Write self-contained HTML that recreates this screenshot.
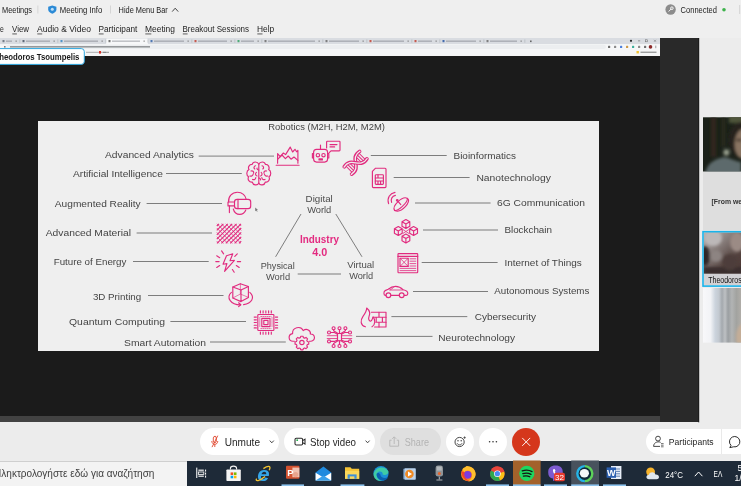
<!DOCTYPE html>
<html lang="en">
<head>
<meta charset="utf-8">
<title>Webex Meeting</title>
<style>
html,body{margin:0;padding:0;background:#eeeeee;}
body{width:741px;height:486px;overflow:hidden;position:relative;font-family:"Liberation Sans",sans-serif;}
#app{position:absolute;left:0;top:0;width:741px;height:486px;overflow:hidden;background:#eeeeee;}
.abs{position:absolute;}
#titlebar{left:0;top:0;width:741px;height:19px;background:#efefef;}
#menubar{left:0;top:19px;width:741px;height:19px;background:#efefef;}
#share{left:0;top:38px;width:660px;height:384.4px;background:#1b1b1b;overflow:hidden;}
#chrome-tabs{left:0;top:0;width:660px;height:6px;background:#dcdfe4;}
#chrome-addr{left:0;top:5.6px;width:660px;height:6px;background:#f3f4f5;}
#chrome-bm{left:0;top:12px;width:660px;height:6px;background:#f4f4f4;}
#share-bottom{left:0;top:378px;width:660px;height:6.4px;background:#424242;}
#slide{left:38.3px;top:83.3px;width:560.4px;height:229.9px;background:#efefef;}
#sidepanel{left:660px;top:38px;width:39px;height:384.4px;background:#292929;}
#videostrip{left:699px;top:38px;width:42px;height:384px;background:#ececec;}
#toolbar{left:0;top:422.4px;width:741px;height:38.2px;background:#ececec;}
#taskbar{left:0;top:460.5px;width:741px;height:26px;background:#1e2a38;}
#search{left:0;top:0.5px;width:187px;height:25.5px;background:#f3f3f3;border-top:0.8px solid #cfcfcf;box-sizing:border-box;}
.pill{position:absolute;background:#ffffff;border-radius:14px;}
#overlay{left:0;top:0;width:741px;height:486px;filter:blur(0.28px);}
svg text{font-family:"Liberation Sans",sans-serif;}
</style>
</head>
<body>
<div id="app">
  <div id="titlebar" class="abs"></div>
  <div id="menubar" class="abs"></div>
  <div id="share" class="abs">
    <div id="chrome-tabs" class="abs"></div>
    <div id="chrome-addr" class="abs"></div>
    <div id="chrome-bm" class="abs"></div>
    <div id="slide" class="abs"></div>
    <div id="share-bottom" class="abs"></div>
  </div>
  <div id="sidepanel" class="abs"></div>
  <div id="videostrip" class="abs"></div>
  <div id="toolbar" class="abs">
    <div class="pill" style="left:200px;top:5.6px;width:79px;height:27.4px;"></div>
    <div class="pill" style="left:284px;top:5.6px;width:91px;height:27.4px;"></div>
    <div class="pill" style="left:380px;top:5.6px;width:61px;height:27.4px;background:#dfdfdf;"></div>
    <div class="pill" style="left:446px;top:5.6px;width:28px;height:28px;"></div>
    <div class="pill" style="left:479px;top:5.6px;width:28px;height:28px;"></div>
    <div class="pill" style="left:512px;top:5.6px;width:28px;height:28px;background:#d5371c;"></div>
    <div class="pill" style="left:646px;top:6.5px;width:120px;height:25px;"></div>
  </div>
  <div id="taskbar" class="abs">
    <div id="search" class="abs"></div>
  </div>
  <svg id="overlay" class="abs" width="741" height="486" viewBox="0 0 741 486">
    <defs><filter id="soft" x="-2%" y="-2%" width="104%" height="104%"><feGaussianBlur stdDeviation="0.38"/></filter><filter id="soft2" x="-2%" y="-10%" width="104%" height="120%"><feGaussianBlur stdDeviation="0.25"/></filter></defs>
    <!--TITLEBAR-->
    <g id="titlebar-text" font-size="9.5" fill="#222222">
    <text x="2" y="12.8" textLength="30.0" lengthAdjust="spacingAndGlyphs">Meetings</text>
    <rect x="37.5" y="5.5" width="0.8" height="8" fill="#cfcfcf"/>
    <path d="M52.3 5.4 L56.4 6.8 V9.6 C56.4 11.6 54.6 13 52.3 13.8 C50 13 48.2 11.6 48.2 9.6 V6.8 Z" fill="#2b8ad6"/>
    <circle cx="52.3" cy="9.3" r="1.5" fill="#bfe0f7"/>
    <text x="59.8" y="12.8" textLength="42.5" lengthAdjust="spacingAndGlyphs">Meeting Info</text>
    <rect x="110" y="5.5" width="0.8" height="8" fill="#cfcfcf"/>
    <text x="118.6" y="12.8" textLength="49.2" lengthAdjust="spacingAndGlyphs">Hide Menu Bar</text>
    <path d="M172.2 11.6 L175.2 8.2 L178.2 11.6" stroke="#333" stroke-width="0.9" fill="none"/>
    <circle cx="670.6" cy="9.5" r="5.2" fill="#8c8c8c"/>
    <path d="M668.6 11.5 L671.2 8.9 M671.9 8.2 m-1.3 0 a1.3 1.3 0 1 0 2.6 0 a1.3 1.3 0 1 0 -2.6 0" stroke="#fff" stroke-width="0.9" fill="none"/>
    <text x="680.6" y="12.8" textLength="36.4" lengthAdjust="spacingAndGlyphs">Connected</text>
    <circle cx="724" cy="9.8" r="1.8" fill="#3db24b"/>
    <rect x="739.3" y="5" width="0.8" height="9" fill="#cfcfcf"/>
    </g>
    <!--/TITLEBAR-->
    <!--MENUBAR-->
    <g id="menubar-text" font-size="9.5" fill="#1e1e1e">
    <text x="0" y="32.4" textLength="3.8" lengthAdjust="spacingAndGlyphs">e</text>
    <text x="12" y="32.4" textLength="17.0" lengthAdjust="spacingAndGlyphs">View</text>
    <rect x="12.3" y="33.6" width="4.6" height="0.7" fill="#1e1e1e"/>
    <text x="37" y="32.4" textLength="54.0" lengthAdjust="spacingAndGlyphs">Audio &amp; Video</text>
    <rect x="37.3" y="33.6" width="4.9" height="0.7" fill="#1e1e1e"/>
    <text x="98.5" y="32.4" textLength="38.9" lengthAdjust="spacingAndGlyphs">Participant</text>
    <rect x="98.8" y="33.6" width="4.8" height="0.7" fill="#1e1e1e"/>
    <text x="145" y="32.4" textLength="30.0" lengthAdjust="spacingAndGlyphs">Meeting</text>
    <rect x="145.3" y="33.6" width="6" height="0.7" fill="#1e1e1e"/>
    <text x="182.5" y="32.4" textLength="66.5" lengthAdjust="spacingAndGlyphs">Breakout Sessions</text>
    <rect x="182.8" y="33.6" width="4.8" height="0.7" fill="#1e1e1e"/>
    <text x="257" y="32.4" textLength="17.2" lengthAdjust="spacingAndGlyphs">Help</text>
    <rect x="257.3" y="33.6" width="5.2" height="0.7" fill="#1e1e1e"/>
    </g>
    <!--/MENUBAR-->
    <!--CHROME-->
    <g id="browser-chrome">
    <rect x="0" y="38" width="660" height="6.2" fill="#d9dce1"/>
    <rect x="106" y="38.6" width="42" height="5.6" rx="1.2" fill="#f7f8f9"/>
    <rect x="0" y="44.2" width="660" height="5.4" fill="#f6f7f8"/>
    <rect x="6" y="44.8" width="600" height="4.2" rx="2.1" fill="#eceef0"/>
    <rect x="0" y="49.6" width="660" height="5.6" fill="#f4f5f6"/>
    <rect x="2.5" y="40" width="2" height="2.2" fill="#5a6570" opacity="0.8"/>
    <rect x="6" y="40.6" width="6" height="1.1" fill="#6b7078" opacity="0.55"/>
    <rect x="15.5" y="40.5" width="1.3" height="1.3" fill="#555" opacity="0.6"/>
    <rect x="19.6" y="39.5" width="0.6" height="3.2" fill="#9aa0a6" opacity="0.7"/>
    <rect x="22.5" y="40" width="2" height="2.2" fill="#3d4a5a" opacity="0.8"/>
    <rect x="26" y="40.6" width="24" height="1.1" fill="#6b7078" opacity="0.55"/>
    <rect x="53.5" y="40.5" width="1.3" height="1.3" fill="#555" opacity="0.6"/>
    <rect x="57.6" y="39.5" width="0.6" height="3.2" fill="#9aa0a6" opacity="0.7"/>
    <rect x="60.5" y="40" width="2" height="2.2" fill="#2c7fc0" opacity="0.8"/>
    <rect x="64" y="40.6" width="34" height="1.1" fill="#6b7078" opacity="0.55"/>
    <rect x="101.5" y="40.5" width="1.3" height="1.3" fill="#555" opacity="0.6"/>
    <rect x="105.6" y="39.5" width="0.6" height="3.2" fill="#9aa0a6" opacity="0.7"/>
    <rect x="108.5" y="40" width="2" height="2.2" fill="#555" opacity="0.8"/>
    <rect x="112" y="40.6" width="28" height="1.1" fill="#6b7078" opacity="0.55"/>
    <rect x="143.5" y="40.5" width="1.3" height="1.3" fill="#555" opacity="0.6"/>
    <rect x="147.6" y="39.5" width="0.6" height="3.2" fill="#9aa0a6" opacity="0.7"/>
    <rect x="150.5" y="40" width="2" height="2.2" fill="#2d5fa8" opacity="0.8"/>
    <rect x="154" y="40.6" width="30" height="1.1" fill="#6b7078" opacity="0.55"/>
    <rect x="187.5" y="40.5" width="1.3" height="1.3" fill="#555" opacity="0.6"/>
    <rect x="191.6" y="39.5" width="0.6" height="3.2" fill="#9aa0a6" opacity="0.7"/>
    <rect x="194.5" y="40" width="2" height="2.2" fill="#c0392b" opacity="0.8"/>
    <rect x="198" y="40.6" width="29" height="1.1" fill="#6b7078" opacity="0.55"/>
    <rect x="230.5" y="40.5" width="1.3" height="1.3" fill="#555" opacity="0.6"/>
    <rect x="234.6" y="39.5" width="0.6" height="3.2" fill="#9aa0a6" opacity="0.7"/>
    <rect x="237.5" y="40" width="2" height="2.2" fill="#2a9d5c" opacity="0.8"/>
    <rect x="241" y="40.6" width="13" height="1.1" fill="#6b7078" opacity="0.55"/>
    <rect x="257.5" y="40.5" width="1.3" height="1.3" fill="#555" opacity="0.6"/>
    <rect x="261.6" y="39.5" width="0.6" height="3.2" fill="#9aa0a6" opacity="0.7"/>
    <rect x="264.5" y="40" width="2" height="2.2" fill="#666" opacity="0.8"/>
    <rect x="268" y="40.6" width="47" height="1.1" fill="#6b7078" opacity="0.55"/>
    <rect x="318.5" y="40.5" width="1.3" height="1.3" fill="#555" opacity="0.6"/>
    <rect x="322.6" y="39.5" width="0.6" height="3.2" fill="#9aa0a6" opacity="0.7"/>
    <rect x="325.5" y="40" width="2" height="2.2" fill="#666" opacity="0.8"/>
    <rect x="329" y="40.6" width="30" height="1.1" fill="#6b7078" opacity="0.55"/>
    <rect x="362.5" y="40.5" width="1.3" height="1.3" fill="#555" opacity="0.6"/>
    <rect x="366.6" y="39.5" width="0.6" height="3.2" fill="#9aa0a6" opacity="0.7"/>
    <rect x="369.5" y="40" width="2" height="2.2" fill="#c0392b" opacity="0.8"/>
    <rect x="373" y="40.6" width="31" height="1.1" fill="#6b7078" opacity="0.55"/>
    <rect x="407.5" y="40.5" width="1.3" height="1.3" fill="#555" opacity="0.6"/>
    <rect x="411.6" y="39.5" width="0.6" height="3.2" fill="#9aa0a6" opacity="0.7"/>
    <rect x="414.5" y="40" width="2" height="2.2" fill="#c0392b" opacity="0.8"/>
    <rect x="418" y="40.6" width="14" height="1.1" fill="#6b7078" opacity="0.55"/>
    <rect x="435.5" y="40.5" width="1.3" height="1.3" fill="#555" opacity="0.6"/>
    <rect x="439.6" y="39.5" width="0.6" height="3.2" fill="#9aa0a6" opacity="0.7"/>
    <rect x="442.5" y="40" width="2" height="2.2" fill="#1d4fa0" opacity="0.8"/>
    <rect x="446" y="40.6" width="30" height="1.1" fill="#6b7078" opacity="0.55"/>
    <rect x="479.5" y="40.5" width="1.3" height="1.3" fill="#555" opacity="0.6"/>
    <rect x="483.6" y="39.5" width="0.6" height="3.2" fill="#9aa0a6" opacity="0.7"/>
    <rect x="486.5" y="40" width="2" height="2.2" fill="#666" opacity="0.8"/>
    <rect x="490" y="40.6" width="27" height="1.1" fill="#6b7078" opacity="0.55"/>
    <rect x="520.5" y="40.5" width="1.3" height="1.3" fill="#555" opacity="0.6"/>
    <rect x="524.6" y="39.5" width="0.6" height="3.2" fill="#9aa0a6" opacity="0.7"/>
    <rect x="530" y="40.5" width="1.6" height="1.6" fill="#333" opacity="0.7"/>
    <circle cx="631" cy="40.8" r="1.1" fill="#222"/>
    <rect x="638" y="40.6" width="2.2" height="0.6" fill="#666"/>
    <rect x="645.5" y="39.8" width="2" height="2" fill="none" stroke="#666" stroke-width="0.5"/>
    <path d="M654 39.8 l2 2 m0 -2 l-2 2" stroke="#666" stroke-width="0.5"/>
    <rect x="10" y="46.3" width="140" height="1.1" fill="#3c4043" opacity="0.7"/>
    <rect x="4" y="46" width="1.6" height="1.6" fill="#444" opacity="0.7"/>
    <rect x="608" y="45.8" width="2.2" height="2.2" rx="0.6" fill="#555" opacity="0.85"/>
    <rect x="614" y="45.8" width="2.2" height="2.2" rx="0.6" fill="#777" opacity="0.85"/>
    <rect x="620" y="45.8" width="2.2" height="2.2" rx="0.6" fill="#2f6bd6" opacity="0.85"/>
    <rect x="626" y="45.8" width="2.2" height="2.2" rx="0.6" fill="#c58a2a" opacity="0.85"/>
    <rect x="632" y="45.8" width="2.2" height="2.2" rx="0.6" fill="#1aa08a" opacity="0.85"/>
    <rect x="638" y="45.8" width="2.2" height="2.2" rx="0.6" fill="#777" opacity="0.85"/>
    <rect x="644" y="45.8" width="2.2" height="2.2" rx="0.6" fill="#555" opacity="0.85"/>
    <circle cx="650.5" cy="46.9" r="1.8" fill="#8c2b2b"/>
    <rect x="655.5" y="45.6" width="0.7" height="2.6" fill="#777"/>
    <rect x="86" y="51.8" width="20" height="1" fill="#666" opacity="0.5"/>
    <rect x="99" y="51" width="2" height="2.6" fill="#d93025"/>
    <rect x="103" y="51.8" width="6" height="1" fill="#555" opacity="0.6"/>
    <rect x="636.5" y="51" width="2.4" height="2.4" fill="#f2c12e"/>
    <rect x="640.5" y="51.7" width="16" height="1" fill="#444" opacity="0.7"/>
    </g>
    <g id="name-label">
    <rect x="-6" y="48.6" width="90.3" height="15.8" rx="3" fill="#ffffff" stroke="#2ba6df" stroke-width="1"/>
    <text x="-5.6" y="60" font-size="9.3" font-weight="bold" fill="#1a1a1a" textLength="85" lengthAdjust="spacingAndGlyphs">Theodoros Tsoumpelis</text>
    </g>
    <!--/CHROME-->
    <g id="slide-content" filter="url(#soft)">
    <!--SLIDE-->
    <g id="slide-lines" stroke="#707070" stroke-width="0.9" fill="none">
    <line x1="198.7" y1="156.1" x2="274" y2="156.1"/>
    <line x1="166" y1="173.5" x2="241.8" y2="173.5"/>
    <line x1="146.6" y1="203.5" x2="222" y2="203.5"/>
    <line x1="136.6" y1="233" x2="212" y2="233"/>
    <line x1="133" y1="261.5" x2="208.7" y2="261.5"/>
    <line x1="148" y1="295.5" x2="223.5" y2="295.5"/>
    <line x1="170.4" y1="321.5" x2="246" y2="321.5"/>
    <line x1="210" y1="342" x2="285.8" y2="342"/>
    <line x1="370.8" y1="155.5" x2="446.7" y2="155.5"/>
    <line x1="393.7" y1="177.5" x2="469.6" y2="177.5"/>
    <line x1="415" y1="203" x2="490.6" y2="203"/>
    <line x1="423" y1="230" x2="498" y2="230"/>
    <line x1="421.7" y1="262.5" x2="497.6" y2="262.5"/>
    <line x1="413" y1="291.5" x2="488" y2="291.5"/>
    <line x1="391.4" y1="316.6" x2="467.3" y2="316.6"/>
    <line x1="356" y1="336.4" x2="432.5" y2="336.4"/>
    <line x1="301" y1="214" x2="275.6" y2="256.8"/><line x1="335.8" y1="214" x2="362" y2="256.8"/><line x1="297.7" y1="274" x2="341" y2="274"/>
    </g>
    <g id="slide-labels" font-size="9.4" fill="#444444">
    <text x="105" y="158.1" textLength="89.0" lengthAdjust="spacingAndGlyphs">Advanced Analytics</text>
    <text x="73" y="176.6" textLength="89.8" lengthAdjust="spacingAndGlyphs">Artificial Intelligence</text>
    <text x="54.8" y="206.6" textLength="85.9" lengthAdjust="spacingAndGlyphs">Augmented Reality</text>
    <text x="45.7" y="236.1" textLength="85.3" lengthAdjust="spacingAndGlyphs">Advanced Material</text>
    <text x="53.7" y="264.6" textLength="72.7" lengthAdjust="spacingAndGlyphs">Future of Energy</text>
    <text x="92.9" y="299.6" textLength="48.3" lengthAdjust="spacingAndGlyphs">3D Printing</text>
    <text x="69" y="325.1" textLength="96.0" lengthAdjust="spacingAndGlyphs">Quantum Computing</text>
    <text x="124" y="346.1" textLength="82.0" lengthAdjust="spacingAndGlyphs">Smart Automation</text>
    <text x="453.5" y="158.6" textLength="62.5" lengthAdjust="spacingAndGlyphs">Bioinformatics</text>
    <text x="476.4" y="180.9" textLength="74.6" lengthAdjust="spacingAndGlyphs">Nanotechnology</text>
    <text x="497" y="206.1" textLength="88.0" lengthAdjust="spacingAndGlyphs">6G Communication</text>
    <text x="504.4" y="232.8" textLength="47.6" lengthAdjust="spacingAndGlyphs">Blockchain</text>
    <text x="504.4" y="265.8" textLength="77.3" lengthAdjust="spacingAndGlyphs">Internet of Things</text>
    <text x="494.3" y="294.4" textLength="95.1" lengthAdjust="spacingAndGlyphs">Autonomous Systems</text>
    <text x="474.7" y="319.7" textLength="61.3" lengthAdjust="spacingAndGlyphs">Cybersecurity</text>
    <text x="438.3" y="340.6" textLength="76.7" lengthAdjust="spacingAndGlyphs">Neurotechnology</text>
    <text x="268.3" y="130.2" textLength="116.6" lengthAdjust="spacingAndGlyphs">Robotics (M2H, H2M, M2M)</text>
    </g>
    <g id="slide-center" font-size="9.2" fill="#4c4c4c">
    <text x="305.6" y="201.6" textLength="27.2" lengthAdjust="spacingAndGlyphs">Digital</text>
    <text x="307.2" y="212.6" textLength="24.1" lengthAdjust="spacingAndGlyphs">World</text>
    <text x="260.7" y="269.4" textLength="34.0" lengthAdjust="spacingAndGlyphs">Physical</text>
    <text x="266" y="280.1" textLength="24.1" lengthAdjust="spacingAndGlyphs">World</text>
    <text x="347.2" y="267.9" textLength="27.0" lengthAdjust="spacingAndGlyphs">Virtual</text>
    <text x="349.2" y="278.7" textLength="23.9" lengthAdjust="spacingAndGlyphs">World</text>
    <text x="300" y="243.3" font-weight="bold" fill="#e32a80" font-size="10.2" textLength="39" lengthAdjust="spacingAndGlyphs">Industry</text>
    <text x="312.2" y="256.1" font-weight="bold" fill="#e32a80" font-size="10.2" textLength="15" lengthAdjust="spacingAndGlyphs">4.0</text>
    </g>
    <!--/SLIDE-->
    <!--ICONS-->
    <g id="slide-icons" fill="none" stroke="#e12c7f" stroke-width="1.15" stroke-linecap="round" stroke-linejoin="round">
      <!-- analytics -->
      <g id="ic-analytics">
        <path d="M276.2 165.2 H299.1"/>
        <path d="M277.6 163.2 V153.6 L280.2 156.6 L283.4 153 L285.6 154.6 L290.2 147.1 L292.6 152 L295 149.3 L296.6 151.8 L297.9 150.4 V163.2"/>
        <path d="M277.6 159.4 L282 155 L285.4 158.6 L288.2 156 L291 159.2 L294 157 L297.9 160.4"/>
      </g>
      <!-- robot -->
      <g id="ic-robot">
        <rect x="313.6" y="149.3" width="14" height="12.8" rx="3"/>
        <path d="M320.5 149.3 V145"/>
        <path d="M313.6 153.6 H312.4 V158 H313.6 M327.6 153.6 H328.8 V158 H327.6"/>
        <circle cx="317.9" cy="155.2" r="1.7"/><circle cx="323.5" cy="155.2" r="1.7"/>
        <rect x="319" y="158.8" width="3.4" height="1.2"/>
        <path d="M329.2 152.6 L331 150.8 H339.2 Q340 150.8 340 150 V142 Q340 141.2 339.2 141.2 H327.4 Q326.6 141.2 326.6 142 V148"/>
        <path d="M330 144.6 H337 M330 146.9 H334.6"/>
      </g>
      <!-- dna -->
      <g id="ic-dna" transform="translate(355.6 162.8) rotate(-45)">
        <path d="M-9.2 -5 V5 M-6.8 -5.6 V5.6 M-4.4 -5.4 V5.4 M9.2 -5 V5 M6.8 -5.6 V5.6 M4.4 -5.4 V5.4" stroke-width="1"/>
        <path d="M-10.8 5.2 C 1.5 8, -1.5 -8, 10.8 -5.2" stroke-width="3.7"/>
        <path d="M-11.2 5.1 C 1.5 8, -1.5 -8, 11.2 -5.1" stroke-width="1.3" stroke="#efefef"/>
        <path d="M-10.8 -5.2 C 1.5 -8, -1.5 8, 10.8 5.2" stroke-width="3.7"/>
        <path d="M-11.2 -5.1 C 1.5 -8, -1.5 8, 11.2 5.1" stroke-width="1.3" stroke="#efefef"/>
      </g>
      <!-- brain -->
      <g id="ic-brain">
        <path d="M258.8 164.2 C257.6 161.4 253 161.2 252.2 164.4 C249.2 164.2 247.6 167.4 249 169.6 C246.2 171 246.2 175.4 248.6 176.8 C247.2 179.6 249.4 182.6 252.2 182 C253 185.4 257.6 185.8 258.8 183 Z"/>
        <path d="M258.8 164.2 C260 161.4 264.6 161.2 265.4 164.4 C268.4 164.2 270 167.4 268.6 169.6 C271.4 171 271.4 175.4 269 176.8 C270.4 179.6 268.2 182.6 265.4 182 C264.6 185.4 260 185.8 258.8 183"/>
        <path d="M255.6 165.8 C254 166 253.4 168 254.8 169 M251 171 C252.6 170.4 254 171.6 253.6 173.2 M249.8 176 C251.6 176.4 253 175.4 253.2 174 M256.4 172.4 C255 173.4 255.4 175.6 257 176 M252.6 179.4 C254 180.2 255.8 179.2 255.8 177.6 M258.8 170 C257.6 170 256.8 169 257 168"/>
        <path d="M262 165.8 C263.6 166 264.2 168 262.8 169 M266.6 171 C265 170.4 263.6 171.6 264 173.2 M267.8 176 C266 176.4 264.6 175.4 264.4 174 M261.2 172.4 C262.6 173.4 262.2 175.6 260.6 176 M265 179.4 C263.6 180.2 261.8 179.2 261.8 177.6 M258.8 178 C260 178 260.8 179 260.6 180"/>
      </g>
      <!-- AR headset -->
      <g id="ic-ar">
        <path d="M228.6 202 C228 196.6 232 192.2 237.4 192.2 C242.4 192.2 245.6 195.6 246.2 199.4"/>
        <rect x="234.5" y="199.4" width="16.2" height="9.2" rx="2.6"/>
        <path d="M238 199.4 V208.6"/>
        <path d="M234.5 202 H228 V205.9 H234.5"/>
        <path d="M229.4 205.9 V212.6"/>
        <path d="M233.3 209 C234.2 212.4 237 214.4 239.8 214.4 C242.6 214.4 244.8 212.6 245.8 210"/>
      </g>
      <!-- mesh -->
      <g id="ic-mesh" stroke-linecap="butt">
        <path d="M219.0 223.8 L216.8 226.0 M223.4 223.8 L216.8 230.4 M227.8 223.8 L216.8 234.8 M232.2 223.8 L216.8 239.2 M236.6 223.8 L217.0 243.4 M241.0 223.8 L221.4 243.4 M241.2 228.0 L225.8 243.4 M241.2 232.4 L230.2 243.4 M241.2 236.8 L234.6 243.4 M241.2 241.2 L239.0 243.4" stroke-width="1.15"/>
        <path d="M216.8 241.2 L219.0 243.4 M216.8 236.8 L223.4 243.4 M216.8 232.4 L227.8 243.4 M216.8 228.0 L232.2 243.4 M217.0 223.8 L236.6 243.4 M221.4 223.8 L241.0 243.4 M225.8 223.8 L241.2 239.2 M230.2 223.8 L241.2 234.8 M234.6 223.8 L241.2 230.4 M239.0 223.8 L241.2 226.0" stroke-width="0.75"/>
      </g>
      <!-- energy -->
      <g id="ic-energy">
        <path d="M226.5 255.8 L232.8 253.8 L230 260.7 L234.4 260.3 L224.6 271.4 L226.9 263.6 L223 264.2 Z"/>
        <path d="M215.8 261.6 H219.1 M216.7 255.8 L219.7 257.7 M221.6 250.9 L223.6 253.8 M237.3 253.8 L234.8 256.4 M237.3 261.6 H240.6 M236.3 265.5 L239.2 267.5 M232.4 269.5 L234.2 272.2 M216.7 267.5 L219.7 265.5"/>
      </g>
      <!-- 3d printing -->
      <g id="ic-3d">
        <path d="M232.8 287 L240.4 283.7 L248.4 286.5 L241 290 Z"/>
        <path d="M232.8 287 V298 L241 301.6 V290 M248.4 286.5 V297.4 L241 301.6"/>
        <path d="M240.4 283.7 V294 L232.8 298 M240.4 294 L248.4 297.4" stroke-width="0.6"/>
        <path d="M231.4 292.4 C225.6 297.6 231 305 240.6 304.8 M243.6 304.6 C251.6 303.6 255.4 297.4 249.8 292.4"/>
        <path d="M238.6 302.8 L240.8 304.8 L238.6 306.6"/>
      </g>
      <!-- chip -->
      <g id="ic-chip">
        <rect x="257.8" y="314.5" width="16.1" height="16" rx="0.8"/>
        <rect x="261.8" y="318.4" width="8.2" height="8.2"/>
        <rect x="263.8" y="320.4" width="4.2" height="4.2"/>
        <path d="M260.4 313 V310.8 M263.1 313 V310.8 M265.85 313 V310.8 M268.6 313 V310.8 M271.3 313 V310.8" />
        <path d="M260.4 332 V334.2 M263.1 332 V334.2 M265.85 332 V334.2 M268.6 332 V334.2 M271.3 332 V334.2" />
        <path d="M256.4 317.1 H254.2 M256.4 319.8 H254.2 M256.4 322.5 H254.2 M256.4 325.2 H254.2 M256.4 327.9 H254.2"/>
        <path d="M275.4 317.1 H277.6 M275.4 319.8 H277.6 M275.4 322.5 H277.6 M275.4 325.2 H277.6 M275.4 327.9 H277.6"/>
        <path d="M260.8 316.5 H271 M260.8 328.6 H271 M259.8 317.6 V327.6 M272 317.6 V327.6" stroke-width="0.7" stroke-dasharray="0.8 1.2"/>
      </g>
      <!-- cloud gear -->
      <g id="ic-cloud">
        <path d="M294.4 341.2 H293 C288.2 341.2 287.6 334.4 292.6 333.6 C292 327.4 300.8 325.2 303.2 330.6 C306.6 328 311 330.4 310.4 334 C315.6 334 315.8 341 311 341.2 H309.4"/>
        <path d="M300.8 336.2 h2.2 l0.4 1.4 l1.3 0.55 l1.3 -0.75 l1.55 1.55 l-0.75 1.3 l0.55 1.3 l1.4 0.4 v2.2 l-1.4 0.4 l-0.55 1.3 l0.75 1.3 l-1.55 1.55 l-1.3 -0.75 l-1.3 0.55 l-0.4 1.4 h-2.2 l-0.4 -1.4 l-1.3 -0.55 l-1.3 0.75 l-1.55 -1.55 l0.75 -1.3 l-0.55 -1.3 l-1.4 -0.4 v-2.2 l1.4 -0.4 l0.55 -1.3 l-0.75 -1.3 l1.55 -1.55 l1.3 0.75 l1.3 -0.55 z"/>
        <circle cx="301.9" cy="342.5" r="2.2"/>
      </g>
      <!-- neuro -->
      <g id="ic-neuro">
        <rect x="337.5" y="333.5" width="4" height="7.2" rx="0.6"/>
        <path d="M339.5 333.5 V329.8 M339.5 340.7 V344.4"/>
        <path d="M338 333.5 L333.6 330.8 V329.8 M341 333.5 L345.4 330.8 V329.8 M338 340.7 L333.6 343.4 V344.4 M341 340.7 L345.4 343.4 V344.4"/>
        <path d="M337.5 334.2 L334.4 332.5 H330.6 M337.5 340 L334.4 341.4 H330.6 M341.5 334.2 L344.6 332.5 H348.4 M341.5 340 L344.6 341.4 H348.4"/>
        <path d="M337.5 335.7 H327.2 M337.5 338.5 H327.2 M341.5 335.7 H351.8 M341.5 338.5 H351.8" stroke-width="0.8"/>
        <circle cx="339.5" cy="328.2" r="1.5"/><circle cx="333.6" cy="328.2" r="1.5"/><circle cx="345.4" cy="328.2" r="1.5"/>
        <circle cx="339.5" cy="346" r="1.5"/><circle cx="333.6" cy="346" r="1.5"/><circle cx="345.4" cy="346" r="1.5"/>
        <circle cx="329" cy="332.5" r="1.5"/><circle cx="329" cy="341.4" r="1.5"/>
        <circle cx="350" cy="332.5" r="1.5"/><circle cx="350" cy="341.4" r="1.5"/>
      </g>
      <!-- cyber -->
      <g id="ic-cyber">
        <path d="M365.4 326.8 C360.4 325.4 360 320.6 363 316.4 C365.4 313 366.8 311 366.7 308 C369.6 310.4 370.4 313.6 369 316.6 C368 319 369.2 321 370.5 321.2 C372.4 320.6 372.2 318.6 373.1 316.9 C375.4 319.6 375.6 324.6 372 326.8"/>
        <path d="M371.4 312.2 H386 V327 H374.6"/>
        <path d="M372.8 317.2 H386 M375.8 322.2 H386 M379 312.2 V317.2 M382.4 317.2 V322.2 M376.2 317.4 V322.2 M379 322.2 V327"/>
      </g>
      <!-- sim -->
      <g id="ic-sim">
        <path d="M375.6 168.2 H385 Q386 168.2 386 169.2 V186.6 Q386 187.6 385 187.6 H373.4 Q372.4 187.6 372.4 186.6 V171.4 Z"/>
        <rect x="375.3" y="174.7" width="8.1" height="9.7" rx="0.8"/>
        <path d="M375.3 178 H383.4 M375.3 181 H383.4 M378 174.7 V178 M380.6 181 V184.4 M378 181 V184.4"/>
      </g>
      <!-- 6G dish -->
      <g id="ic-6g">
        <path d="M394.6 210.4 C391.6 205.6 402.6 195.6 407.4 198.4 C412 201 401.6 214 394.6 210.4 Z"/>
        <path d="M394.6 210.4 C397.6 211.4 408 202.6 407.4 198.4"/>
        <path d="M400.8 204.6 L397.6 200.8"/>
        <circle cx="397.2" cy="200.3" r="0.8"/>
        <path d="M391.6 202.4 C390.4 198.8 392.2 196.2 395.4 195.4 M388.6 203.6 C386.8 198 389.8 193.4 395 192.4"/>
      </g>
      <!-- blockchain -->
      <g id="ic-block">
        <path d="M405.9 219.6 l3.9 2.2 v4.5 l-3.9 2.2 l-3.9 -2.2 v-4.5 z M402 221.8 l3.9 2.2 l3.9 -2.2 M405.9 224 v4.5"/>
        <path d="M398.3 226.6 l3.9 2.2 v4.5 l-3.9 2.2 l-3.9 -2.2 v-4.5 z M394.4 228.8 l3.9 2.2 l3.9 -2.2 M398.3 231 v4.5"/>
        <path d="M413.6 226.6 l3.9 2.2 v4.5 l-3.9 2.2 l-3.9 -2.2 v-4.5 z M409.7 228.8 l3.9 2.2 l3.9 -2.2 M413.6 231 v4.5"/>
        <path d="M405.9 234 l3.9 2.2 v4.5 l-3.9 2.2 l-3.9 -2.2 v-4.5 z M402 236.2 l3.9 2.2 l3.9 -2.2 M405.9 238.4 v4.5"/>
        <path d="M403 229.6 L408.8 233.4 M408.8 229.6 L403 233.4" stroke-width="0.8"/>
      </g>
      <!-- IoT -->
      <g id="ic-iot">
        <rect x="398" y="253.6" width="19.7" height="19.1" rx="0.6"/>
        <path d="M398 256.4 H417.7"/>
        <rect x="400" y="258.2" width="8.2" height="8.2"/>
        <path d="M400 258.2 L408.2 266.4 M408.2 258.2 L400 266.4" stroke-width="0.8"/>
        <path d="M410 258.8 H415.8 M410 261.2 H415.8 M410 263.6 H415.8 M410 266 H415.8 M400 268.4 H415.8 M400 270.6 H415.8" stroke-width="0.8"/>
      </g>
      <!-- car -->
      <g id="ic-car">
        <path d="M386 295.3 H385.2 C383.6 295.3 383.4 291.4 385.2 290.6 L388.2 289.2 C391 286.8 392.6 286.3 395.6 286.3 C399.2 286.3 400.8 287.4 403.2 289.8 C406 290.4 407.8 291.2 407.8 293.4 C407.8 294.8 407.2 295.3 406.2 295.3 H404.2 M399.2 295.3 H390.9"/>
        <circle cx="388.4" cy="295.3" r="2.4"/><circle cx="401.7" cy="295.3" r="2.4"/>
        <path d="M389.6 290 H403 M390.4 289.8 L393.4 287.6" stroke-width="0.8"/>
      </g>
    </g>
    <path id="slide-cursor" d="M255.2 207.6 L255.2 211.2 L256.2 210.4 L257 211.8 L257.6 211.4 L256.8 210.2 L258 210 Z" fill="#777" stroke="none"/>

    <!--/ICONS-->
    </g>
    <!--VIDEOS-->
    <defs>
      <filter id="blur2" x="-20%" y="-20%" width="140%" height="140%"><feGaussianBlur stdDeviation="1.6"/></filter>
      <filter id="blur1" x="-20%" y="-20%" width="140%" height="140%"><feGaussianBlur stdDeviation="0.9"/></filter>
      <clipPath id="cv1"><rect x="703" y="117.3" width="38" height="54.4"/></clipPath>
      <clipPath id="cv2"><rect x="703.8" y="232.4" width="38" height="41.4"/></clipPath>
      <clipPath id="cv3"><rect x="703" y="288" width="38" height="54.6"/></clipPath>
      <linearGradient id="gv3" x1="703" y1="0" x2="741" y2="0" gradientUnits="userSpaceOnUse">
        <stop offset="0" stop-color="#f8f8fa"/><stop offset="0.2" stop-color="#f2f3f6"/><stop offset="0.32" stop-color="#ccd4dd"/>
        <stop offset="0.42" stop-color="#c3c9d0"/><stop offset="0.5" stop-color="#a4a9ae"/><stop offset="0.58" stop-color="#bdc0c3"/>
        <stop offset="0.66" stop-color="#9b9fa2"/><stop offset="0.76" stop-color="#b2b4b4"/><stop offset="0.88" stop-color="#a2a3a0"/><stop offset="1" stop-color="#b0ada8"/>
      </linearGradient>
      <linearGradient id="gv2" x1="703" y1="232" x2="741" y2="274" gradientUnits="userSpaceOnUse">
        <stop offset="0" stop-color="#b9b3b1"/><stop offset="0.35" stop-color="#8a807e"/><stop offset="0.7" stop-color="#54433f"/><stop offset="1" stop-color="#4a3734"/>
      </linearGradient>
    </defs>
    <g id="video-strip">
      <rect x="698.4" y="38" width="0.8" height="384.4" fill="#161616"/>
      <!-- video 1 -->
      <rect x="703" y="117.3" width="38" height="54.4" fill="#1b2119"/>
      <g clip-path="url(#cv1)"><g filter="url(#blur2)">
        <rect x="711" y="117" width="5" height="40" fill="#33271a"/>
        <rect x="722" y="117" width="3" height="30" fill="#2c2a1c"/>
        <rect x="729" y="113" width="16" height="10" fill="#50553b"/>
        <ellipse cx="741" cy="140" rx="12" ry="18" fill="#28221d"/>
        <ellipse cx="744" cy="144" rx="9.5" ry="15" fill="#8a7562"/>
        <ellipse cx="739" cy="140" rx="3" ry="1.5" fill="#4a3a30"/>
        <path d="M705 174 C707 163 714 160 722 157.5 C728 156 730 160 741 162 V174 Z" fill="#5d6b6c"/>
        <ellipse cx="726.4" cy="152.4" rx="3" ry="3.2" fill="#959c8b"/>
      </g></g>
      <!-- from tile -->
      <rect x="703" y="171.7" width="38" height="58.6" fill="#dedede"/>
      <text x="711.5" y="203.6" font-size="7.3" font-weight="bold" fill="#333333" textLength="30.6" lengthAdjust="spacingAndGlyphs">[From we</text>
      <!-- video 2 -->
      <rect x="703.8" y="232.4" width="38" height="41.4" fill="url(#gv2)"/>
      <g clip-path="url(#cv2)"><g filter="url(#blur2)">
        <ellipse cx="713" cy="238" rx="9" ry="8" fill="#bcb8b8"/>
        <ellipse cx="705" cy="256" rx="5" ry="10" fill="#2f2727"/>
        <ellipse cx="716" cy="256" rx="6" ry="6" fill="#8d8482"/>
        <rect x="703" y="267" width="40" height="8" fill="#3a2f2f"/>
        <ellipse cx="737" cy="242" rx="7" ry="10" fill="#9b8b85"/>
        <ellipse cx="730" cy="262" rx="8" ry="8" fill="#4e3e3a"/>
      </g></g>
      <rect x="703.8" y="273.8" width="38" height="11.6" fill="#d2d1d4"/>
      <text x="708.3" y="283" font-size="8.2" fill="#111111" textLength="33.4" lengthAdjust="spacingAndGlyphs">Theodoros</text>
      <rect x="703" y="231.7" width="40" height="54.4" fill="none" stroke="#19b3ea" stroke-width="1.6"/>
      <!-- video 3 -->
      <rect x="703" y="288" width="38" height="54.6" fill="url(#gv3)"/>
      <g clip-path="url(#cv3)"><g filter="url(#blur2)">
        <ellipse cx="743" cy="338" rx="7" ry="14" fill="#c4ad97"/>
      </g></g>
    </g>
    <!--/VIDEOS-->
    <!--TOOLBAR-->
    <g id="toolbar-items" font-size="10.5" fill="#1f1f1f">
    <g stroke="#e0452c" stroke-width="0.9" fill="none" stroke-linecap="round"><rect x="213.3" y="436.4" width="3" height="6.2" rx="1.5"/><path d="M211.8 441.4 C211.8 445.4 217.8 445.4 217.8 441.4 M214.8 444.6 V446.6 M217.6 436 L212.2 446.8"/></g>
    <text x="224.7" y="445.6" textLength="35.3" lengthAdjust="spacingAndGlyphs">Unmute</text>
    <path d="M269.8 440.6 L271.8 442.8 L273.8 440.6" stroke="#333" stroke-width="0.9" fill="none"/>
    <g stroke="#2a2a2a" stroke-width="1.05" fill="none"><rect x="295" y="438.2" width="7.6" height="6.8" rx="1.2"/><path d="M302.6 440.6 L305 439.2 V444 L302.6 442.6"/></g><circle cx="297.2" cy="440.2" r="0.9" fill="#21b04b"/>
    <text x="310" y="445.6" textLength="46.0" lengthAdjust="spacingAndGlyphs">Stop video</text>
    <path d="M365.6 440.6 L367.6 442.8 L369.6 440.6" stroke="#333" stroke-width="0.9" fill="none"/>
    <g stroke="#b5b5b5" stroke-width="0.9" fill="none"><path d="M391.6 440.2 H389.8 V446.2 H398.6 V440.2 H396.8 M394.2 444 V437 M392.2 438.8 L394.2 436.8 L396.2 438.8"/></g>
    <text x="404.7" y="445.6" textLength="24.3" lengthAdjust="spacingAndGlyphs" fill="#b3b3b3">Share</text>
    <g stroke="#333" stroke-width="0.9" fill="none"><circle cx="459.6" cy="442" r="4.6"/><path d="M457.2 443.4 C458.2 445.4 461 445.4 462 443.4"/></g><circle cx="458" cy="440.8" r="0.7" fill="#333"/><circle cx="461.2" cy="440.8" r="0.7" fill="#333"/><path d="M464.6 436.4 v2.4 M463.4 437.6 h2.4" stroke="#333" stroke-width="0.7"/>
    <circle cx="489.6" cy="441.8" r="0.8" fill="#333"/><circle cx="493" cy="441.8" r="0.8" fill="#333"/><circle cx="496.4" cy="441.8" r="0.8" fill="#333"/>
    <path d="M522.5 438.2 L529.9 445.6 M529.9 438.2 L522.5 445.6" stroke="#ffffff" stroke-width="0.95" stroke-linecap="round"/>
    <g stroke="#333" stroke-width="0.9" fill="none"><circle cx="658" cy="438.6" r="2.4"/><path d="M653.6 446.4 C653.6 441.6 659.4 441.2 660.6 442.4 M653.6 446.4 H660"/><path d="M661 443.6 H663.6 M661 445.2 H663.6 M661 446.8 H663.6" stroke-width="0.7"/></g>
    <text x="668.8" y="445.2" textLength="44.8" lengthAdjust="spacingAndGlyphs" font-size="9.6">Participants</text>
    <rect x="721" y="429" width="0.8" height="25" fill="#e4e4e4"/>
    <path d="M731 445.4 A5.2 5.2 0 1 1 733.6 446.8 L729.8 447.6 Z" stroke="#2b2b2b" stroke-width="1" fill="none" stroke-linejoin="round"/>
    </g>
    <!--/TOOLBAR-->
    <!--TASKBAR-->
    <g id="taskbar-items">
    <text x="-5.9" y="477.2" font-size="10.4" fill="#404040" textLength="160.3" lengthAdjust="spacingAndGlyphs">Πληκτρολογήστε εδώ για αναζήτηση</text>
    <rect x="513" y="460.5" width="27.6" height="25.5" fill="#a3622b"/>
    <rect x="571.2" y="460.5" width="27.8" height="25.5" fill="#48525d"/>
    <rect x="281.5" y="484.4" width="22.5" height="1.6" fill="#8ec4ee"/>
    <rect x="340.5" y="484.4" width="23.9" height="1.6" fill="#8ec4ee"/>
    <rect x="486" y="484.4" width="23.0" height="1.6" fill="#8ec4ee"/>
    <rect x="513" y="484.4" width="27.6" height="1.6" fill="#8ec4ee"/>
    <rect x="544" y="484.4" width="23.0" height="1.6" fill="#8ec4ee"/>
    <rect x="571.2" y="484.4" width="27.8" height="1.6" fill="#8ec4ee"/>
    <rect x="603" y="484.4" width="23.0" height="1.6" fill="#8ec4ee"/>
    <g fill="#f2f2f2"><rect x="198.4" y="469.6" width="5.4" height="1.2"/><rect x="198.4" y="475.6" width="5.4" height="1.2"/><rect x="196.2" y="467.6" width="1.1" height="10.4"/><rect x="205" y="469.6" width="1.1" height="2"/><rect x="205" y="472.6" width="1.1" height="2"/><rect x="205" y="475.6" width="1.1" height="2"/><rect x="198.4" y="472" width="5.4" height="2.4" fill="none" stroke="#f2f2f2" stroke-width="0.9"/></g>
    <g><path d="M230.4 469.6 V468.4 C230.4 465.4 236.6 465.4 236.6 468.4 V469.6" stroke="#f2f2f2" stroke-width="1.1" fill="none"/><rect x="226.4" y="469.4" width="14.4" height="11.6" rx="0.8" fill="#f4f4f4"/><rect x="230.6" y="472.4" width="2.6" height="2.6" fill="#f25022"/><rect x="233.9" y="472.4" width="2.6" height="2.6" fill="#7fba00"/><rect x="230.6" y="475.7" width="2.6" height="2.6" fill="#00a4ef"/><rect x="233.9" y="475.7" width="2.6" height="2.6" fill="#ffb900"/></g>
    <g><text x="257.2" y="480.6" font-size="20" font-weight="bold" font-style="italic" fill="#35a6e8" textLength="12.4" lengthAdjust="spacingAndGlyphs">e</text><path d="M256.6 478.6 C254.6 482 260 481 265 476.6 M263.4 468.6 C268 465.4 271.6 465.4 269.2 470.2" stroke="#f4c430" stroke-width="1.3" fill="none"/></g>
    <g><rect x="286" y="465.8" width="13.4" height="13" rx="1" fill="#d35230"/><rect x="292.4" y="467.6" width="7" height="9.6" fill="#f5d5c8" opacity="0.85"/><text x="287.2" y="476.4" font-size="9.4" font-weight="bold" fill="#ffffff">P</text><circle cx="295.6" cy="474.6" r="2.6" fill="#e9a48e"/></g>
    <g><path d="M315.6 472.4 L323.4 466.4 L331.2 472.4 V480.4 H315.6 Z" fill="#1f8ade"/><path d="M315.6 472.8 L323.4 477.6 L331.2 472.8 V480.4 H315.6 Z" fill="#ffffff"/><path d="M315.6 480.4 L323.4 475.6 L331.2 480.4 Z" fill="#3aa0ea"/></g>
    <g><path d="M345 467.2 H350.4 L351.8 468.8 H359.2 V478.8 H345 Z" fill="#f5c436"/><rect x="345" y="470.8" width="14.2" height="8" fill="#fad75a"/><rect x="347.6" y="474.4" width="9" height="4.4" fill="#3f8fd6"/><rect x="349.8" y="476.4" width="4.6" height="2.4" fill="#fad75a"/></g>
    <g><circle cx="381" cy="473.5" r="7.6" fill="#1b8fd6"/><path d="M373.6 474.6 C374 467 385 464.6 388.4 471.6 C388.8 474.6 385 475.6 382.6 474.6 C383.6 471.4 378.4 470 376.8 473.6 C376 476.6 378 480 381.8 481 C377 481.4 373.6 478.6 373.6 474.6 Z" fill="#44d2a0" opacity="0.9"/><path d="M376.8 473.6 C376 477 379 480.6 383.6 480.6 C386 480.2 387.6 478.6 388.2 477 C385 479 380.4 477.8 380.4 474.6 C379.6 473 377.6 472.6 376.8 473.6 Z" fill="#0b5fae"/></g>
    <g><rect x="403.4" y="468.4" width="12.2" height="11.2" rx="1" fill="#8eb2d8"/><rect x="405" y="468.4" width="10.6" height="11.2" fill="#bcd2ea"/><circle cx="409.4" cy="474" r="4.3" fill="#f08a24"/><path d="M408 471.6 L412 474 L408 476.4 Z" fill="#ffffff"/></g>
    <g><rect x="435.6" y="465.6" width="7.4" height="11" rx="2.4" fill="#8f9498"/><rect x="436.8" y="466.6" width="5" height="4" fill="#b4b8bc"/><rect x="438.7" y="476.6" width="1.3" height="3" fill="#9a9ea2"/><rect x="436.4" y="479.4" width="6" height="1.2" fill="#9a9ea2"/><circle cx="439.3" cy="473.4" r="1.5" fill="#e8622a"/></g>
    <g><circle cx="468.3" cy="474" r="7.3" fill="#ff8a16"/><path d="M462.4 469.6 C463.4 467 465.6 467.6 466.4 466 C470 465.6 475.6 468.6 475.6 474 C475.6 478.6 472 481.4 468.3 481.4 C472 479 473.4 474.6 470.6 471.4 C468 469.6 465 470.6 464.6 472.6 Z" fill="#ffbf2e"/><circle cx="467.6" cy="474.8" r="3.9" fill="#7a3be0"/><path d="M461.4 471.4 C461.8 477.4 465 481 470 481.2 C465.4 479.4 463.4 475.4 464.8 472.2 Z" fill="#f0432e"/></g>
    <g><circle cx="497.4" cy="473.7" r="7.2" fill="#e8453c"/><path d="M497.4 473.7 L491 470.4 A7.2 7.2 0 0 0 500.2 480.4 Z" fill="#2fa84f"/><path d="M497.4 473.7 L500.2 480.4 A7.2 7.2 0 0 0 504.2 471.4 Z" fill="#fbc116"/><path d="M497.4 473.7 L504.4 471.6 A7.2 7.2 0 0 0 491.2 470 Z" fill="#e8453c"/><circle cx="497.4" cy="473.7" r="3.3" fill="#ffffff"/><circle cx="497.4" cy="473.7" r="2.6" fill="#4a8af4"/></g>
    <g><circle cx="526.8" cy="473.4" r="7.6" fill="#1ed760"/><path d="M522.2 470.8 C525.2 469.8 529.4 470 532 471.6 M522.8 473.6 C525.4 472.8 528.8 473 531 474.4 M523.4 476.2 C525.6 475.6 528 475.8 529.8 476.8" stroke="#141414" stroke-width="1.3" fill="none" stroke-linecap="round"/></g>
    <g><path d="M555.6 465.6 C560.4 465.6 562.8 467.8 562.8 472.4 C562.8 477 560.4 479 556 479 L553 481.2 V478.6 C549.8 478 548.2 476 548.2 472.4 C548.2 467.8 550.8 465.6 555.6 465.6 Z" fill="#7d5bd0"/><path d="M553 469.4 C552.6 472.6 555 475.6 558.4 476 L559.4 474.6 L557.8 473.4 L557 474 C555.8 473.6 555 472.6 554.8 471.6 L555.6 471 L554.6 469 Z" fill="#ffffff"/><rect x="554" y="472.8" width="11" height="8.4" rx="2" fill="#e63a2e"/><text x="555" y="480" font-size="7.4" fill="#ffffff" textLength="9" lengthAdjust="spacingAndGlyphs">32</text></g>
    <g><circle cx="584.8" cy="473.6" r="7.5" fill="#0f2a3a"/><path d="M584.8 466.1 A7.5 7.5 0 0 1 592.3 473.6 A7.5 7.5 0 0 1 584.8 481.1" fill="none" stroke="#5ed25a" stroke-width="2.4"/><path d="M584.8 481.1 A7.5 7.5 0 0 1 577.3 473.6 A7.5 7.5 0 0 1 584.8 466.1" fill="none" stroke="#25b4e8" stroke-width="2.4"/><ellipse cx="584.4" cy="473.2" rx="4.6" ry="4.2" fill="#f4f8fa"/></g>
    <g><rect x="611" y="466" width="10.4" height="13" fill="#e8eef8"/><path d="M613 469 H620 M613 471.4 H620 M613 473.8 H620 M613 476.2 H620" stroke="#2b579a" stroke-width="0.7"/><rect x="606.6" y="467.4" width="9.4" height="10.4" fill="#2b5fb0"/><text x="607" y="476.2" font-size="9" font-weight="bold" fill="#ffffff" textLength="8.6" lengthAdjust="spacingAndGlyphs">W</text></g>
    <g><circle cx="650.6" cy="471.8" r="4.4" fill="#f7b32b"/><path d="M649 479.2 C645.6 479.2 645.6 474.8 649 474.8 C649.6 471.6 654.6 471.6 655.4 474.4 C659.8 474 660.2 479.2 656.6 479.2 Z" fill="#dfe6ee"/></g>
    <g font-size="9.4" fill="#ffffff">
    <text x="665.3" y="477.6" textLength="17.7" lengthAdjust="spacingAndGlyphs">24°C</text>
    <path d="M694.8 476.2 L698.6 472 L702.4 476.2" stroke="#ffffff" stroke-width="1" fill="none"/>
    <text x="713.6" y="477.4" textLength="8.7" lengthAdjust="spacingAndGlyphs" font-size="8.6">ΕΛ</text>
    <text x="737.4" y="470.8" font-size="8.6">5:</text>
    <text x="734.6" y="481" font-size="8.6">1/</text>
    </g>
    </g>
    <!--/TASKBAR-->
  </svg>
</div>
</body>
</html>
